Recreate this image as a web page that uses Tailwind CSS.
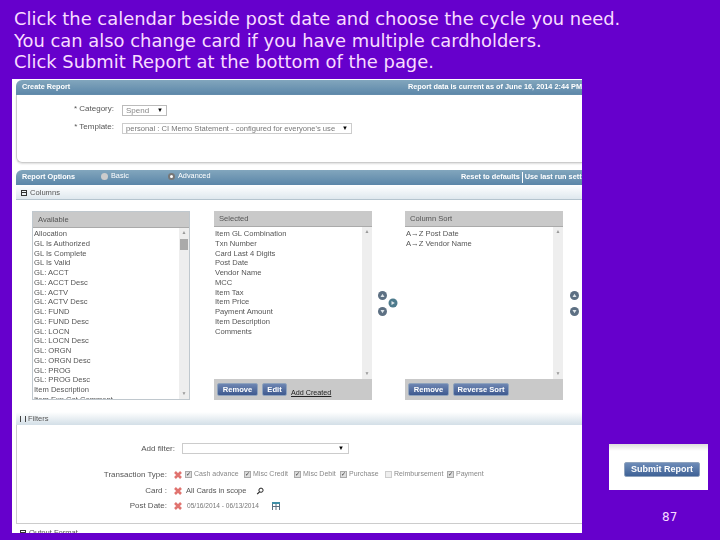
<!DOCTYPE html>
<html lang="en">
<head>
  <meta charset="UTF-8" />
  <title>Submit Report</title>
  <script src="https://cdn.jsdelivr.net/npm/@tailwindcss/browser@4"></script>
</head>
<body class="w-[720px] h-[540px] overflow-hidden bg-[#6600cc] font-['DejaVu_Sans',sans-serif]">
  <!-- slide text -->
  <div class="pl-[14px] pt-[8px] h-[79px] text-[17.9px] leading-[21.5px] text-[#f8dcff] whitespace-nowrap">
    <p>Click the calendar beside post date and choose the cycle you need.</p>
    <p>You can also change card if you have multiple cardholders.</p>
    <p>Click Submit Report at the bottom of the page.</p>
  </div>

  <div class="flex pl-[12px]">
    <!-- report screenshot -->
    <div class="w-[570px] h-[454px] overflow-hidden bg-white pl-[4px] pt-[1px] text-[8px] text-[#555] whitespace-nowrap font-['Liberation_Sans',sans-serif] blur-[0.4px]">
      <div class="w-[566px]">
        <div class="h-[15px] flex items-center pl-[6px] rounded-tl-[6px] bg-gradient-to-b from-[#82a6bd] to-[#5b86a8] text-white font-bold text-[7.3px]">
          <span class="w-[386px] shrink-0">Create Report</span>
          <span class="text-[7.3px]">Report data is current as of June 16, 2014 2:44 PM CDT</span>
        </div>
        <div class="h-[68px] border-l border-b border-[#ccc] rounded-bl-[6px] pt-[10px] shadow-[0_1px_2px_#ddd]">
          <div class="flex h-[18px]">
            <span class="w-[97px] text-right -mt-[2px]">* Category:</span>
            <span class="ml-[8px] w-[45px] h-[11px] border border-[#bbb] flex items-center justify-between px-[3px] text-[8px] text-[#888]">Spend<i class="not-italic text-[6px] text-black">▼</i></span>
          </div>
          <div class="flex">
            <span class="w-[97px] text-right -mt-[2px]">* Template:</span>
            <span class="ml-[8px] w-[230px] h-[11px] border border-[#ccc] flex items-center justify-between px-[3px] text-[7.6px] text-[#777]">personal : CI Memo Statement - configured for everyone's use<i class="not-italic text-[6px] text-black">▼</i></span>
          </div>
        </div>

        <div class="mt-[7px] h-[15px] flex items-center pl-[6px] rounded-tl-[6px] bg-gradient-to-b from-[#82a6bd] to-[#5b86a8] text-white font-bold text-[7.3px]">
          <span class="w-[79px] shrink-0">Report Options</span>
          <span class="w-[7px] h-[7px] shrink-0 rounded-full bg-[#ccc] -mt-[3px]"></span>
          <span class="ml-[3px] w-[57px] shrink-0 -mt-[3px] font-normal">Basic</span>
          <span class="w-[7px] h-[7px] shrink-0 rounded-full bg-white border-2 border-[#777] -mt-[3px]"></span>
          <span class="ml-[3px] w-[283px] shrink-0 -mt-[3px] font-normal">Advanced</span>
          <span class="flex shrink-0"><span class="pr-[2px] border-r border-white">Reset to defaults</span><span class="pl-[2px]">Use last run settings</span></span>
        </div>
        <div class="h-[15px] pt-px flex items-center pl-[5px] gap-[3px] border-b border-[#b5c4ce] bg-gradient-to-b from-white to-[#dfe8ee] text-[7.6px]">
          <span class="w-[6px] h-[6px] border border-[#333] flex items-center"><span class="block w-full h-px bg-[#333]"></span></span>
          <span>Columns</span>
        </div>

        <!-- column pickers -->
        <div class="flex items-start pl-[16px] pt-[11px] h-[212px] text-[7.6px] leading-[9.75px]">
          <div class="w-[158px] h-[189px] border border-[#c0c8ce] flex flex-col">
            <div class="h-[16px] shrink-0 flex items-center pl-[5px] bg-[#c9c9c9] border-b border-[#aaa]">Available</div>
            <div class="flex-1 flex overflow-hidden">
              <div class="flex-1 pl-px pt-px overflow-hidden">
                <p>Allocation</p><p>GL Is Authorized</p><p>GL Is Complete</p><p>GL Is Valid</p><p>GL: ACCT</p><p>GL: ACCT Desc</p><p>GL: ACTV</p><p>GL: ACTV Desc</p><p>GL: FUND</p><p>GL: FUND Desc</p><p>GL: LOCN</p><p>GL: LOCN Desc</p><p>GL: ORGN</p><p>GL: ORGN Desc</p><p>GL: PROG</p><p>GL: PROG Desc</p><p>Item Description</p><p>Item Exp Cat Comment</p>
              </div>
              <div class="w-[10px] bg-[#eee] flex flex-col items-center text-[5px] text-[#999]">
                <span>▲</span><span class="mt-[1px] w-[8px] h-[11px] bg-[#aaa]"></span><span class="mt-auto">▼</span>
              </div>
            </div>
          </div>

          <div class="ml-[24px] w-[158px] h-[189px] bg-[#c9c9c9] flex flex-col">
            <div class="h-[16px] shrink-0 flex items-center pl-[5px] border-b border-[#aaa]">Selected</div>
            <div class="h-[152px] flex bg-white overflow-hidden">
              <div class="flex-1 pl-px pt-[2px]">
                <p>Item GL Combination</p><p>Txn Number</p><p>Card Last 4 Digits</p><p>Post Date</p><p>Vendor Name</p><p>MCC</p><p>Item Tax</p><p>Item Price</p><p>Payment Amount</p><p>Item Description</p><p>Comments</p>
              </div>
              <div class="w-[10px] bg-[#eee] flex flex-col items-center justify-between text-[5px] text-[#999]"><span>▲</span><span>▼</span></div>
            </div>
            <div class="flex-1 flex items-center pl-[3px] gap-[4px] text-[7.6px]">
              <span class="w-[41px] h-[13px] rounded-[2px] border border-[#8fa3bd] bg-gradient-to-b from-[#6e86b2] to-[#3f5a90] text-white font-bold text-center leading-[11px]">Remove</span>
              <span class="w-[25px] h-[13px] rounded-[2px] border border-[#8fa3bd] bg-gradient-to-b from-[#6e86b2] to-[#3f5a90] text-white font-bold text-center leading-[11px]">Edit</span>
              <span class="mt-[6px] underline text-[#222] text-[7.2px]">Add Created</span>
            </div>
          </div>

          <!-- move arrows -->
          <div class="w-[33px] h-[189px] pl-[6px] pt-[80px]">
            <svg width="20" height="26" viewBox="0 0 20 26">
              <circle cx="4.5" cy="4.5" r="4.5" fill="#5d7083"/><path d="M2.5 6 4.5 2.8 6.5 6z" fill="#dfe6ea"/>
              <circle cx="15" cy="12" r="4.5" fill="#4d7a8c"/><path d="M13.5 10 16.8 12 13.5 14z" fill="#dfe6ea"/>
              <circle cx="4.5" cy="20.5" r="4.5" fill="#5d7083"/><path d="M2.5 19 6.5 19 4.5 22.2z" fill="#dfe6ea"/>
            </svg>
          </div>

          <div class="w-[158px] h-[189px] bg-[#c9c9c9] flex flex-col">
            <div class="h-[16px] shrink-0 flex items-center pl-[5px] border-b border-[#aaa]">Column Sort</div>
            <div class="h-[152px] flex bg-white overflow-hidden">
              <div class="flex-1 pl-px pt-[2px]">
                <p>A→Z Post Date</p><p>A→Z Vendor Name</p>
              </div>
              <div class="w-[10px] bg-[#eee] flex flex-col items-center justify-between text-[5px] text-[#999]"><span>▲</span><span>▼</span></div>
            </div>
            <div class="flex-1 flex items-center pl-[3px] gap-[4px] text-[7.6px]">
              <span class="w-[41px] h-[13px] rounded-[2px] border border-[#8fa3bd] bg-gradient-to-b from-[#6e86b2] to-[#3f5a90] text-white font-bold text-center leading-[11px]">Remove</span>
              <span class="w-[56px] h-[13px] rounded-[2px] border border-[#8fa3bd] bg-gradient-to-b from-[#6e86b2] to-[#3f5a90] text-white font-bold text-center leading-[11px]">Reverse Sort</span>
            </div>
          </div>

          <div class="ml-[7px] pt-[80px]">
            <svg width="9" height="26" viewBox="0 0 9 26" class="block">
              <circle cx="4.5" cy="4.5" r="4.5" fill="#5d7083"/><path d="M2.5 6 4.5 2.8 6.5 6z" fill="#dfe6ea"/>
              <circle cx="4.5" cy="20.5" r="4.5" fill="#5d7083"/><path d="M2.5 19 6.5 19 4.5 22.2z" fill="#dfe6ea"/>
            </svg>
          </div>
        </div>

        <!-- filters -->
        <div class="h-[13px] flex items-center pl-[4px] gap-[2px] bg-gradient-to-b from-white to-[#d3dfe7] text-[7.6px]">
          <span class="w-[6px] h-[6px] border-x border-[#444]"></span>
          <span>Filters</span>
        </div>
        <div class="border-l border-[#ccc] h-[99px] border-b pt-[18px] text-[8px]">
          <div class="flex h-[11px] items-center">
            <span class="w-[158px] text-right">Add filter:</span>
            <span class="ml-[7px] w-[167px] h-[11px] border border-[#ccc] flex items-center justify-end pr-[4px] text-[6px] text-black">▼</span>
          </div>
          <div class="flex h-[11px] mt-[15px] items-center">
            <span class="w-[150px] text-right">Transaction Type:</span>
            <svg width="8" height="8" viewBox="0 0 8 8" class="ml-[7px]"><path d="M1 1 7 7M7 1 1 7" stroke="#e0736f" stroke-width="2.6"/></svg>
            <span class="ml-[3px] flex items-center text-[#888] text-[7px]">
              <span class="w-[7px] h-[7px] border border-[#aaa] bg-[#ddd] text-[6px] leading-[5px] text-[#333]">✓</span><span class="ml-[2px] w-[50px]">Cash advance</span>
              <span class="w-[7px] h-[7px] border border-[#aaa] bg-[#ddd] text-[6px] leading-[5px] text-[#333]">✓</span><span class="ml-[2px] w-[41px]">Misc Credit</span>
              <span class="w-[7px] h-[7px] border border-[#aaa] bg-[#ddd] text-[6px] leading-[5px] text-[#333]">✓</span><span class="ml-[2px] w-[37px]">Misc Debit</span>
              <span class="w-[7px] h-[7px] border border-[#aaa] bg-[#ddd] text-[6px] leading-[5px] text-[#333]">✓</span><span class="ml-[2px] w-[36px]">Purchase</span>
              <span class="w-[7px] h-[7px] border border-[#ccc] bg-[#eee]"></span><span class="ml-[2px] w-[53px]">Reimbursement</span>
              <span class="w-[7px] h-[7px] border border-[#aaa] bg-[#ddd] text-[6px] leading-[5px] text-[#333]">✓</span><span class="ml-[2px]">Payment</span>
            </span>
          </div>
          <div class="flex h-[11px] mt-[5px] items-center">
            <span class="w-[150px] text-right">Card :</span>
            <svg width="8" height="8" viewBox="0 0 8 8" class="ml-[7px]"><path d="M1 1 7 7M7 1 1 7" stroke="#e0736f" stroke-width="2.6"/></svg>
            <span class="ml-[4px] w-[67px] text-[7.5px]">All Cards in scope</span>
            <svg width="8" height="8" viewBox="0 0 8 8" class="ml-[3px]"><circle cx="5" cy="3.2" r="2.1" fill="none" stroke="#222"/><path d="M3.5 4.8 1.2 7.2" stroke="#222" stroke-width="1.2"/></svg>
          </div>
          <div class="flex h-[11px] mt-[4px] items-center">
            <span class="w-[150px] text-right">Post Date:</span>
            <svg width="8" height="8" viewBox="0 0 8 8" class="ml-[7px]"><path d="M1 1 7 7M7 1 1 7" stroke="#e0736f" stroke-width="2.6"/></svg>
            <span class="ml-[5px] w-[85px] text-[6.6px] text-[#777]">05/16/2014 - 06/13/2014</span>
            <svg width="8" height="8" viewBox="0 0 8 8"><path d="M0 0h8v2H0z" fill="#3e8ea6"/><path d="M.5 2v6M7.5 2v6M4 2v6M0 4.5h8" stroke="#5c6f80"/></svg>
          </div>
        </div>
        <div class="flex items-center pl-[4px] gap-[3px] pt-[3px] text-[7.6px]">
          <span class="w-[6px] h-[6px] border border-[#333] flex items-center"><span class="block w-full h-px bg-[#333]"></span></span>
          <span>Output Format</span>
        </div>
      </div>
    </div>

    <!-- submit crop and page number -->
    <div class="ml-[27px] w-[99px] pt-[365px]">
      <div class="h-[46px] bg-white bg-gradient-to-b from-[#ddd] via-white via-15% to-white pt-[18px] pl-[15px]">
        <div class="w-[76px] h-[15px] rounded-[2px] border border-[#8fa3bd] bg-gradient-to-b from-[#6e8cb8] to-[#3f6296] text-white text-[9px] leading-[13px] font-bold text-center font-['Liberation_Sans',sans-serif] whitespace-nowrap blur-[0.3px]">Submit Report</div>
      </div>
      <p class="mt-[20px] pl-[53px] text-[12px] leading-[14px] text-[#f8dcff]">87</p>
    </div>
  </div>
</body>
</html>
